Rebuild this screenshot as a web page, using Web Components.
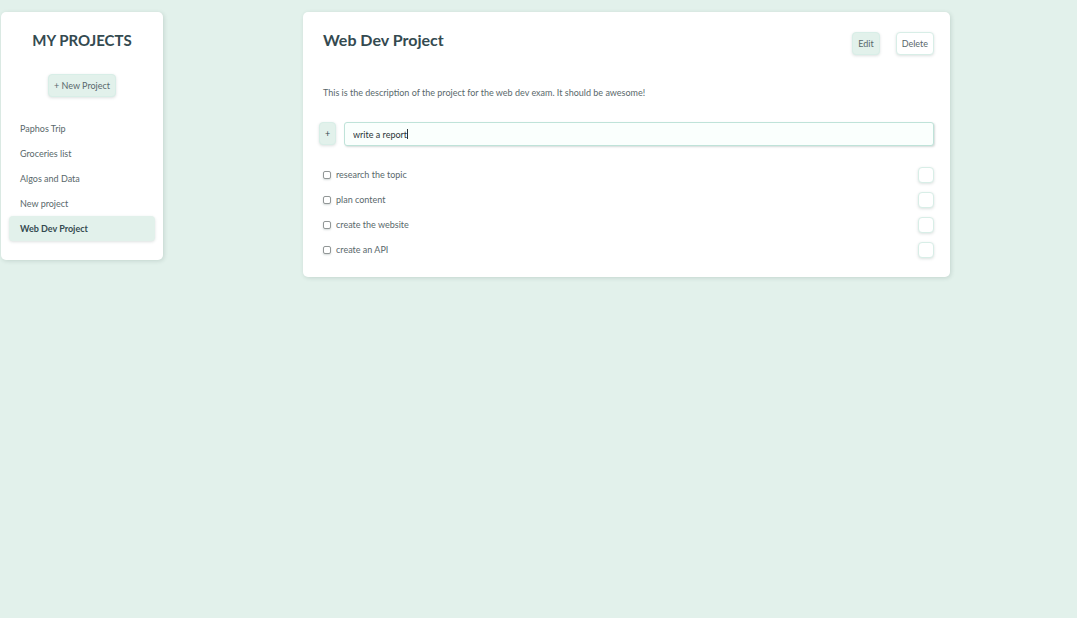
<!DOCTYPE html>
<html lang="en">
<head>
<meta charset="utf-8">
<title>My Projects</title>
<style>
  html { background: #e2f1eb; }
  body {
    margin: 0;
    color: #59686b;
    font: 9px/12px "Century Gothic", Lato, "Open Sans", sans-serif;
    --mint: #e2f1eb;
    --line: #d8eee7;
    --ink: #344a50;
    --shadow: 0 1px 3px rgba(40, 70, 65, .16);
  }
</style>
</head>
<body>
<todo-app></todo-app>

<template id="app-template">
  <style>
    :host {
      display: grid;
      grid-template-columns: 162fr 140fr 647fr 127fr;
      align-items: start;
      padding: 12px 0 12px 1px;
    }
    project-view { grid-column: 3; }
  </style>
  <project-nav>
    <project-link>Paphos Trip</project-link>
    <project-link>Groceries list</project-link>
    <project-link>Algos and Data</project-link>
    <project-link>New project</project-link>
    <project-link active>Web Dev Project</project-link>
  </project-nav>
  <project-view>
    <span slot="title">Web Dev Project</span>
    <span slot="description">This is the description of the project for the web dev exam. It should be awesome!</span>
    <task-item>research the topic</task-item>
    <task-item>plan content</task-item>
    <task-item>create the website</task-item>
    <task-item>create an API</task-item>
  </project-view>
</template>

<template id="nav-template">
  <style>
    :host {
      display: block;
      box-sizing: border-box;
      padding: 18px 8px 19px;
      border-radius: 5px;
      background: #fff;
      box-shadow: 1px 1px 4px rgba(40, 70, 65, .16);
    }
    h1 { margin: 0; color: var(--ink); font-size: 15px; line-height: 20px; text-align: center; }
    .new { display: flex; justify-content: center; margin: 24px 0 19px; }
    nav { display: block; }
  </style>
  <h1>MY PROJECTS</h1>
  <div class="new"><soft-button filled>+ New Project</soft-button></div>
  <nav><slot></slot></nav>
</template>

<template id="link-template">
  <style>
    :host { display: block; }
    a {
      display: block;
      padding: 7px 11px 6px;
      border-radius: 4px;
      color: inherit;
      text-decoration: none;
    }
    :host([active]) a {
      background: var(--mint);
      color: var(--ink);
      font-weight: 700;
      box-shadow: var(--shadow);
    }
  </style>
  <a href="#"><slot></slot></a>
</template>

<template id="button-template">
  <style>
    :host { display: inline-block; }
    button {
      display: block;
      box-sizing: border-box;
      width: 100%;
      height: 23px;
      padding: 0 5px;
      border: 1px solid var(--line);
      border-radius: 4px;
      background: #fff;
      color: inherit;
      font: inherit;
      box-shadow: var(--shadow);
    }
    :host([filled]) button { background: var(--mint); }
    :host([small]) button { height: 16px; padding: 0; }
  </style>
  <button type="button"><slot></slot></button>
</template>

<template id="view-template">
  <style>
    :host {
      display: block;
      box-sizing: border-box;
      padding: 18px 16px 15px;
      border-radius: 5px;
      background: #fff;
      box-shadow: 1px 1px 4px rgba(40, 70, 65, .16);
    }
    header { display: flex; align-items: flex-start; gap: 16px; padding-left: 4px; }
    h2 { flex: 1; margin: 0; color: var(--ink); font-size: 16px; line-height: 20px; }
    header soft-button { margin-top: 2px; }
    p { margin: 32px 0 23px; padding-left: 4px; }
    form { display: flex; gap: 8px; margin-bottom: 16px; color: var(--ink); }
    form soft-button { width: 17px; }
    .field { position: relative; flex: 1; display: flex; }
    .caret {
      position: absolute;
      left: 63px;
      top: 7px;
      width: 1px;
      height: 10px;
      background: #2b3538;
    }
    input {
      flex: 1;
      min-width: 0;
      box-sizing: border-box;
      height: 24px;
      padding: 0 8px;
      border: 1px solid #bfe3d9;
      border-radius: 3px;
      outline: 0;
      background: #fafffd;
      color: #2b3538;
      caret-color: transparent;
      font: inherit;
      box-shadow: 1px 1px 2px rgba(40, 70, 65, .2);
    }
  </style>
  <header>
    <h2><slot name="title"></slot></h2>
    <soft-button filled>Edit</soft-button>
    <soft-button>Delete</soft-button>
  </header>
  <p><slot name="description"></slot></p>
  <form>
    <soft-button filled>+</soft-button>
    <div class="field">
      <input type="text" aria-label="New task" value="write a report">
      <span class="caret"></span>
    </div>
  </form>
  <slot></slot>
</template>

<template id="task-template">
  <style>
    :host { display: flex; align-items: center; height: 25px; padding-left: 4px; }
    label { flex: 1; display: flex; align-items: center; gap: 5px; }
    input {
      appearance: none;
      width: 8px;
      height: 8px;
      box-sizing: border-box;
      margin: 0;
      border: 1px solid #929797;
      border-radius: 2px;
      background: #fff;
      box-shadow: 0 1px 2px rgba(40, 70, 65, .2);
    }
    soft-button { width: 16px; }
  </style>
  <label><input type="checkbox"><slot></slot></label>
  <soft-button small></soft-button>
</template>

<script>
  function define(name, templateId) {
    customElements.define(name, class extends HTMLElement {
      constructor() {
        super();
        this.attachShadow({ mode: "open" })
          .append(document.getElementById(templateId).content.cloneNode(true));
      }
    });
  }
  define("soft-button", "button-template");
  define("project-link", "link-template");
  define("task-item", "task-template");
  define("project-nav", "nav-template");
  define("project-view", "view-template");
  define("todo-app", "app-template");
</script>
</body>
</html>
